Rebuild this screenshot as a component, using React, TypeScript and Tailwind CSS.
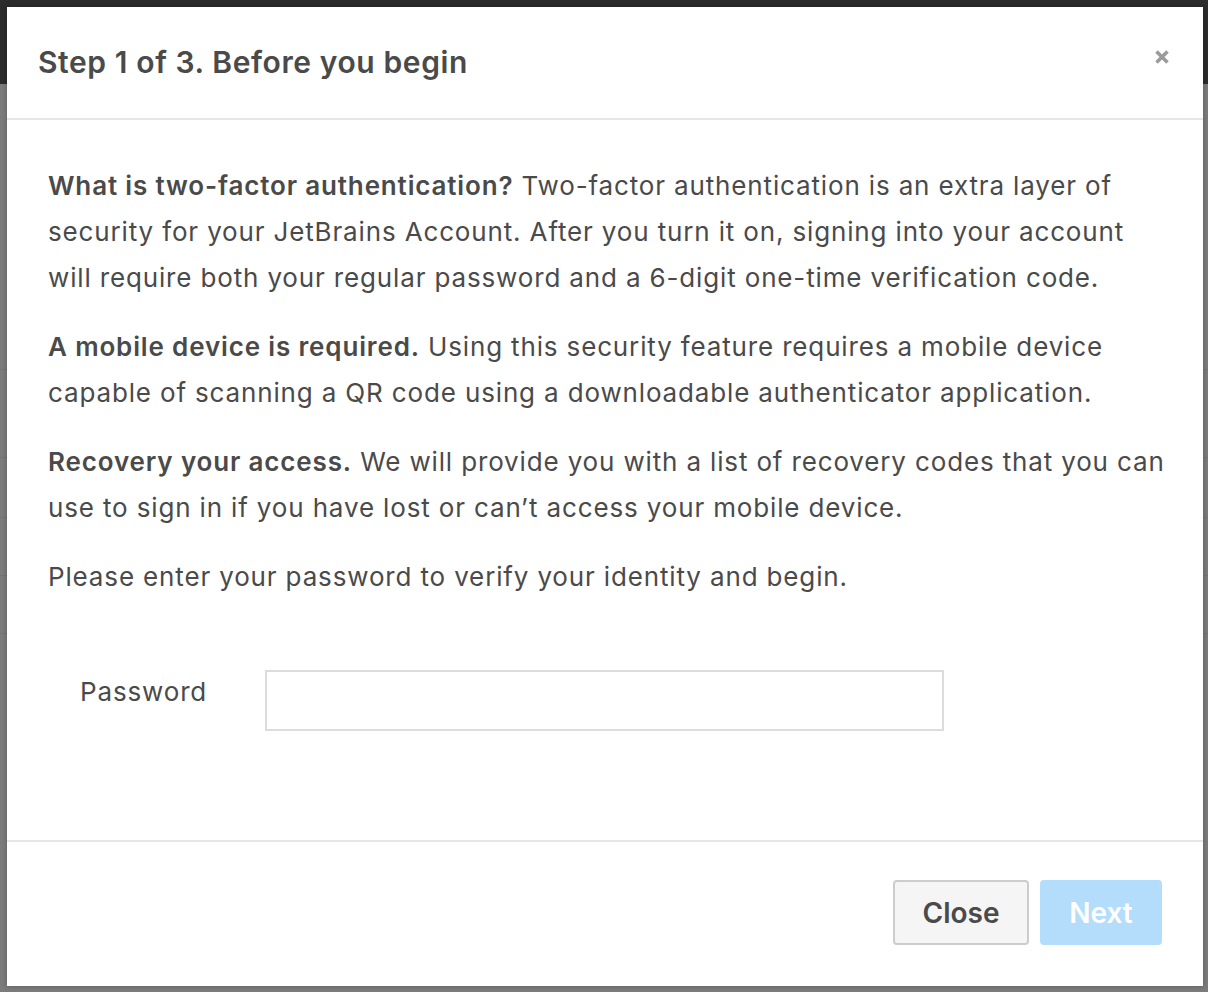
import React from "react";

export default function App() {
  const font = { fontFamily: "Inter, 'Noto Sans', sans-serif" };
  return (
    <div className="relative w-[1208px] h-[992px] overflow-hidden" style={font}>
      <div className="flex flex-col w-full h-full">
        <div className="h-[84px] bg-[#2c2c2c]" />
        <div className="flex-1 bg-[#7c7c7c] flex flex-col">
          <div className="h-[226px]" />
          <div className="h-[60px] border-b border-[#747474]" />
          <div className="h-[88px] border-b border-[#747474]" />
          <div className="h-[60px] border-b border-[#747474]" />
          <div className="h-[58px] border-b border-[#747474]" />
          <div className="h-[58px] border-b border-[#747474]" />
        </div>
      </div>
      <div className="absolute left-[7px] top-[7px] w-[1196px] h-[979px] bg-white flex flex-col shadow-[0_0_6px_rgba(0,0,0,0.25)]">
        <div className="h-[113px] flex items-center justify-between pl-[31px] pr-[33px] border-b-2 border-[#e6e6e6]">
          <h1 className="text-[30px] font-semibold text-[#4a4a4a] tracking-[0.6px]">Step 1 of 3. Before you begin</h1>
          <button className="w-[16px] h-[16px] mb-[12px] flex items-center justify-center">
            <svg width="16" height="16" viewBox="0 0 16 16">
              <path d="M2.5 2.5 L13.5 13.5 M13.5 2.5 L2.5 13.5" stroke="#9b9b9b" strokeWidth="3.6" strokeLinecap="butt" />
            </svg>
          </button>
        </div>
        <div className="flex-1 pt-[43px] pl-[41px] pr-[34px] text-[26px] leading-[46px] tracking-[0.85px] text-[#4a4a4a] border-b-2 border-[#e6e6e6]">
          <p className="mb-[23px]">
            <span className="font-semibold">What is two-factor authentication?</span> Two-factor authentication is an extra layer of security for your JetBrains Account. After you turn it on, signing into your account will require both your regular password and a 6-digit one-time verification code.
          </p>
          <p className="mb-[23px]">
            <span className="font-semibold">A mobile device is required.</span> Using this security feature requires a mobile device capable of scanning a QR code using a downloadable authenticator application.
          </p>
          <p className="mb-[23px]">
            <span className="font-semibold">Recovery your access.</span> We will provide you with a list of recovery codes that you can use to sign in if you have lost or can’t access your mobile device.
          </p>
          <p>Please enter your password to verify your identity and begin.</p>
          <div className="flex items-start mt-[70px] pl-[32px]">
            <label className="w-[185px] mt-[-1px] text-[26px] leading-[46px] text-[#4a4a4a]">Password</label>
            <input type="password" className="w-[679px] h-[61px] border-2 border-[#dcdcdc] outline-none" />
          </div>
        </div>
        <div className="h-[144px] flex items-start justify-end gap-[11px] pt-[38px] pr-[41px]">
          <button className="w-[136px] h-[65px] bg-[#f5f5f5] border-2 border-[#cccccc] rounded-[4px] text-[28px] font-semibold text-[#4a4a4a]">Close</button>
          <button className="w-[122px] h-[65px] bg-[#b3ddfb] rounded-[4px] text-[28px] font-semibold text-white">Next</button>
        </div>
      </div>
    </div>
  );
}
